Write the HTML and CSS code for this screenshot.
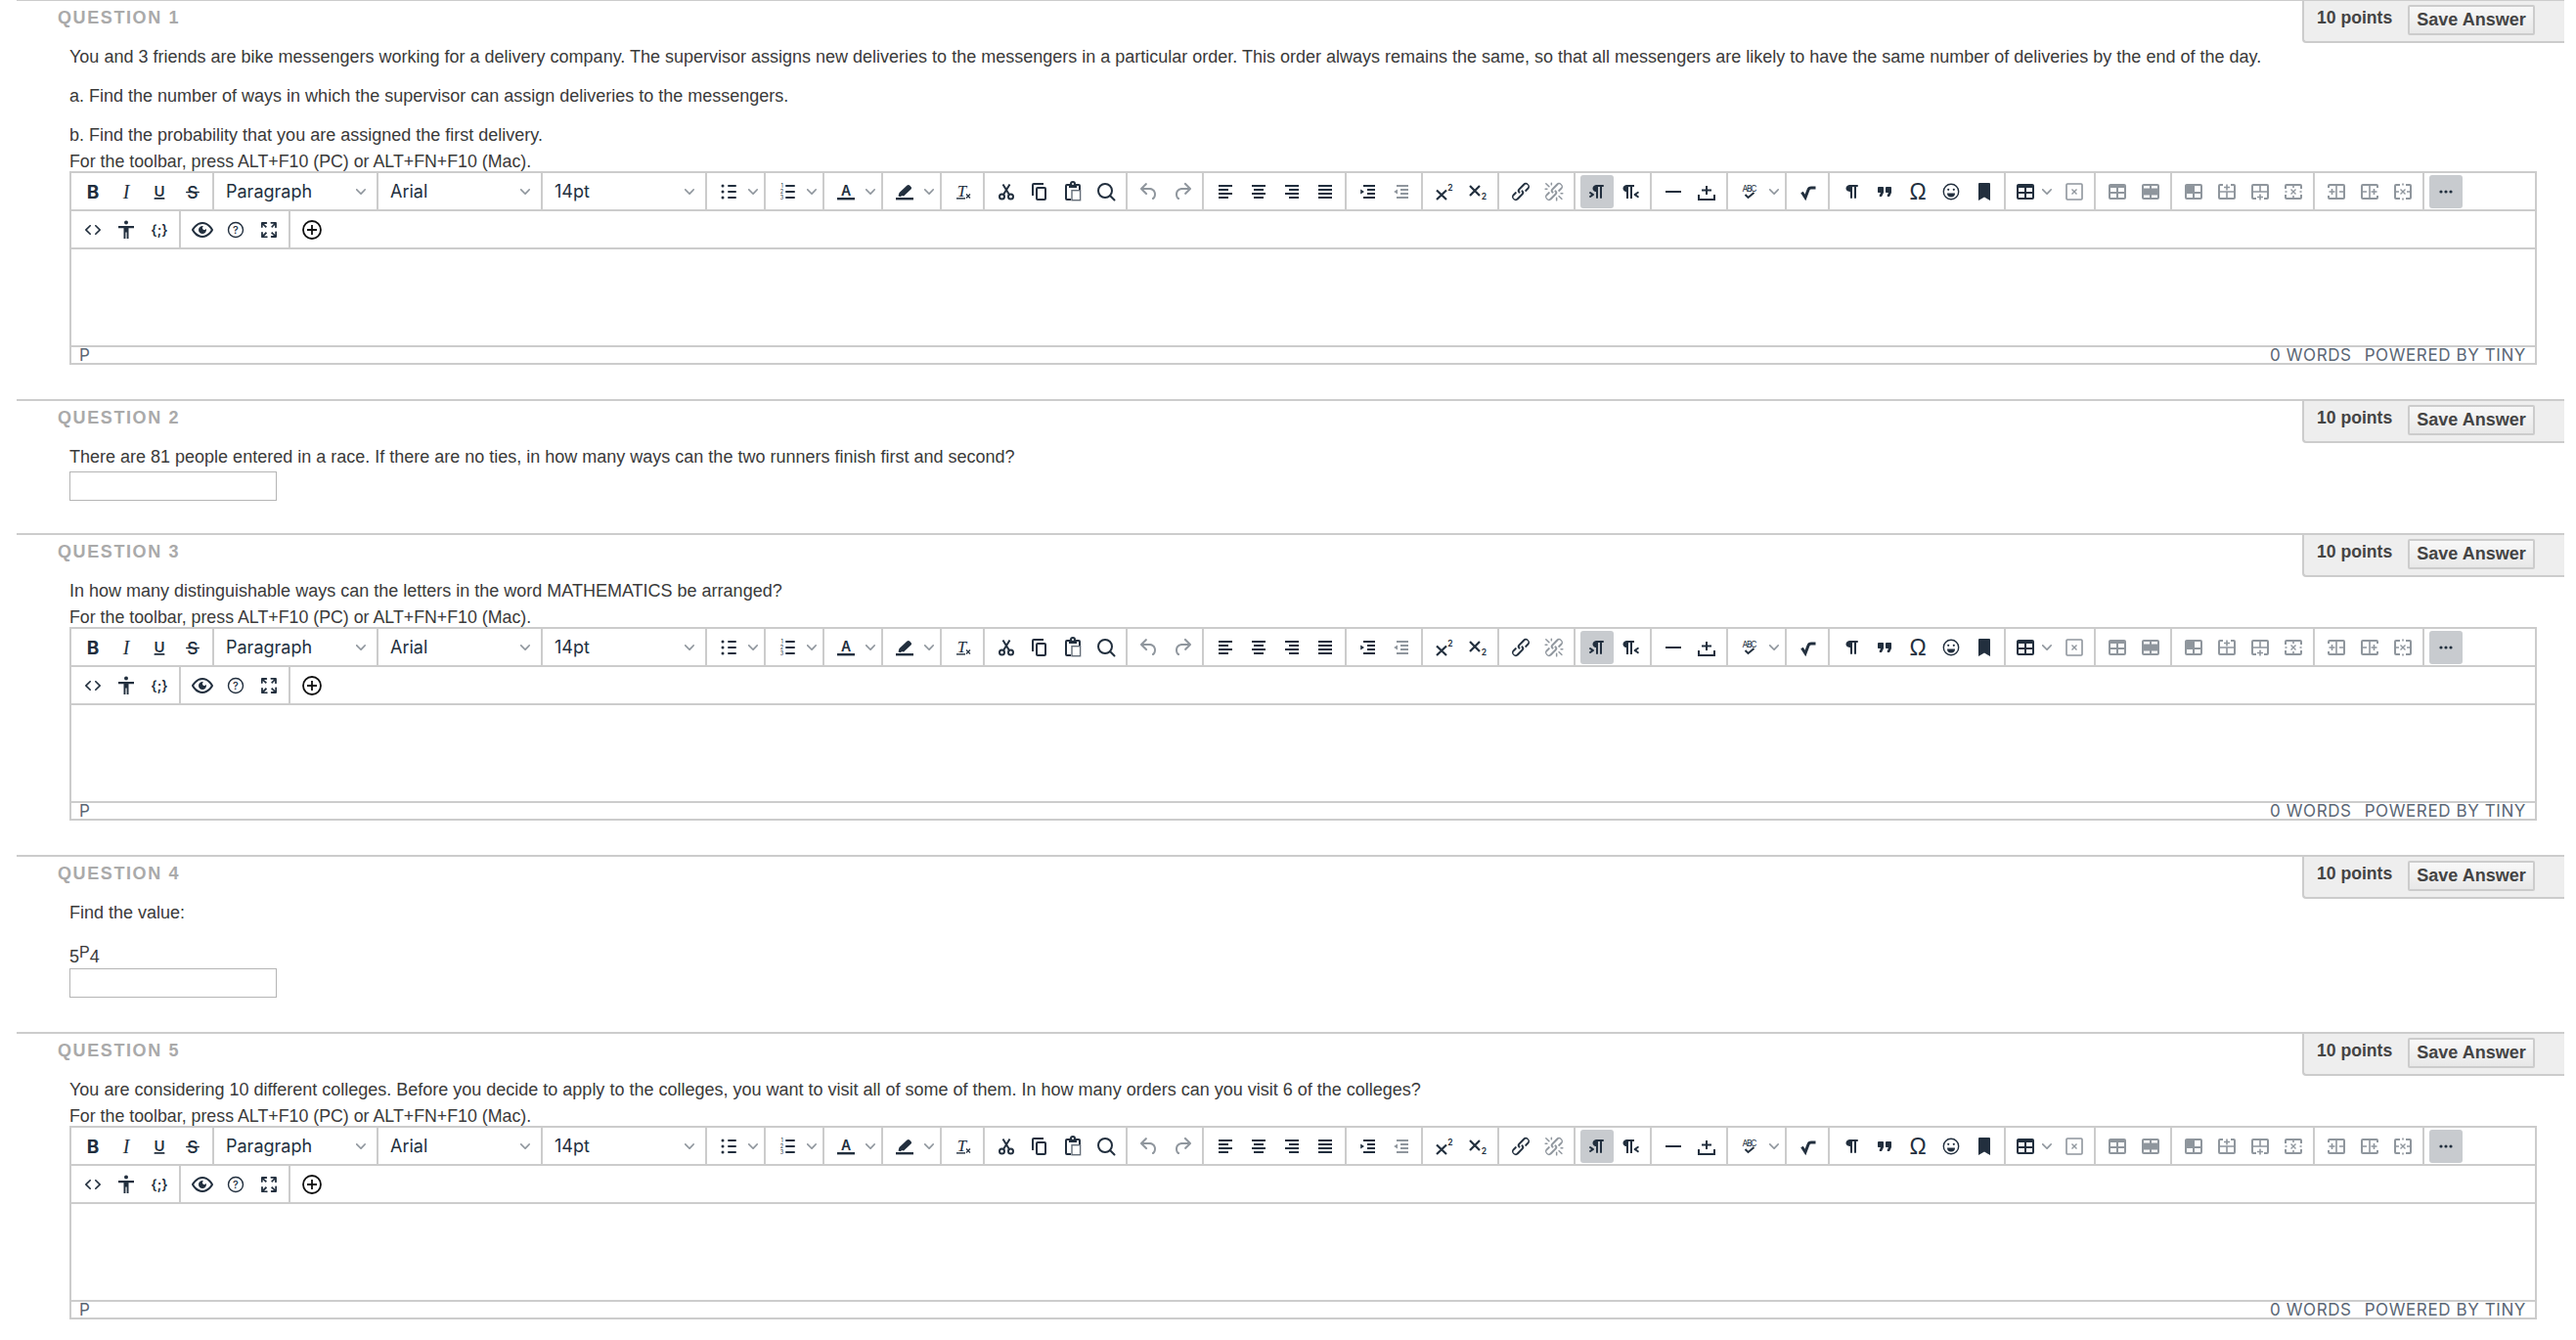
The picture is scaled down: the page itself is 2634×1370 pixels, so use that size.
FILE: index.html
```html
<!DOCTYPE html>
<html lang="en">
<head>
    <meta charset="UTF-8">
    <meta name="viewport" content="width=device-width, initial-scale=1.0">
    <title>Test</title>
    <link rel="stylesheet" href="styles.css">
</head>
<body>
    <section class="question">
        <div class="question-head">
            <h3 class="question-title">QUESTION 1</h3>
            <div class="points"><span>10 points</span><button class="save-btn">Save Answer</button></div>
        </div>
        <div class="question-body">
            <p>You and 3 friends are bike messengers working for a delivery company. The supervisor assigns new deliveries to the messengers in a particular order. This order always remains the same, so that all messengers are likely to have the same number of deliveries by the end of the day.</p>
            <p>a. Find the number of ways in which the supervisor can assign deliveries to the messengers.</p>
            <p class="last">b. Find the probability that you are assigned the first delivery.</p>
            <div class="hint">For the toolbar, press ALT+F10 (PC) or ALT+FN+F10 (Mac).</div>
            <div class="editor"></div>
        </div>
    </section>

    <section class="question">
        <div class="question-head">
            <h3 class="question-title">QUESTION 2</h3>
            <div class="points"><span>10 points</span><button class="save-btn">Save Answer</button></div>
        </div>
        <div class="question-body short">
            <p class="tight">There are 81 people entered in a race. If there are no ties, in how many ways can the two runners finish first and second?</p>
            <input class="answer" type="text">
        </div>
    </section>

    <section class="question">
        <div class="question-head">
            <h3 class="question-title">QUESTION 3</h3>
            <div class="points"><span>10 points</span><button class="save-btn">Save Answer</button></div>
        </div>
        <div class="question-body">
            <p class="last">In how many distinguishable ways can the letters in the word MATHEMATICS be arranged?</p>
            <div class="hint">For the toolbar, press ALT+F10 (PC) or ALT+FN+F10 (Mac).</div>
            <div class="editor"></div>
        </div>
    </section>

    <section class="question">
        <div class="question-head">
            <h3 class="question-title">QUESTION 4</h3>
            <div class="points"><span>10 points</span><button class="save-btn">Save Answer</button></div>
        </div>
        <div class="question-body">
            <p>Find the value:</p>
            <p class="perm">5<sup>P</sup>4</p>
            <input class="answer" type="text">
        </div>
    </section>

    <section class="question">
        <div class="question-head">
            <h3 class="question-title">QUESTION 5</h3>
            <div class="points"><span>10 points</span><button class="save-btn">Save Answer</button></div>
        </div>
        <div class="question-body">
            <p class="last">You are considering 10 different colleges. Before you decide to apply to the colleges, you want to visit all of some of them. In how many orders can you visit 6 of the colleges?</p>
            <div class="hint">For the toolbar, press ALT+F10 (PC) or ALT+FN+F10 (Mac).</div>
            <div class="editor"></div>
        </div>
    </section>

    <script src="script.js"></script>
</body>
</html>
```
FILE: styles.css
```css
* { box-sizing: border-box; }
body {
    margin: -1px 12px 0 17px;
    background: #fff;
    color: #3a3a3a;
    font-family: 'Liberation Sans', Arial, sans-serif;
    font-size: 18px;
    line-height: 20px;
}

.question { border-top: 2px solid #ccc; }
.question-head { display: flex; justify-content: space-between; align-items: flex-start; height: 47px; }
.question-title {
    margin: 7px 0 0 42px;
    color: #aaa;
    font-size: 18px;
    font-weight: bold;
    letter-spacing: 1.6px;
    line-height: 20px;
}
.points {
    display: flex;
    width: 268px;
    height: 43px;
    padding: 4px 30px 0 13px;
    justify-content: space-between;
    align-items: flex-start;
    background: #eee;
    border-left: 2px solid #ccc;
    border-bottom: 2px solid #ccc;
    border-bottom-left-radius: 4px;
    color: #444;
    font-weight: bold;
}
.points span { margin-top: 3px; font-size: 17.6px; }
.save-btn {
    width: 130px;
    height: 31px;
    padding: 0;
    background: linear-gradient(#f8f8f8, #e8e8e8);
    border: 2px solid #ccc;
    border-radius: 2px;
    color: #444;
    font-family: inherit;
    font-size: 18px;
    font-weight: bold;
}

.question-body { padding: 0 28px 35px 54px; }
.question-body.short { padding-bottom: 33px; }
.question-body p { margin: 0 0 20px; }
.question-body p.last { margin-bottom: 7px; }
.question-body p.tight { margin-bottom: 5px; }
.question-body p.perm { height: 27px; margin-bottom: 0; padding-top: 5px; }
.hint { font-size: 17.8px; }
.perm sup { font-size: 16px; line-height: 0; vertical-align: 5px; }
.answer { display: block; width: 212px; height: 30px; background: #fff; border: 1px solid #b5b5b5; }

.editor { border: 2px solid #ccc; color: #222f3e; font-family: Inter, 'Noto Sans', sans-serif; }
.tb-row { display: flex; height: 39px; border-bottom: 2px solid #ccc; }
.tb-group { display: flex; padding: 2px 3px 0 5px; border-right: 2px solid #ccc; }
.tb-group.plain { border-right: 0; }
.tb-btn { display: flex; width: 34px; height: 34px; align-items: center; justify-content: center; border-radius: 3px; }
.tb-btn svg { width: 24px; height: 24px; fill: currentColor; }
.tb-btn.off { opacity: .5; }
.tb-btn.on { background: #c8cbcf; }
.tb-chevron { display: flex; width: 16px; height: 34px; align-items: center; justify-content: center; }
.tb-chevron svg, .tb-select svg { width: 10px; height: 10px; fill: #222f3e; opacity: .5; }
.tb-select {
    display: flex;
    width: 168px;
    padding: 1px 11px 0 12px;
    justify-content: space-between;
    align-items: center;
    border-right: 2px solid #ccc;
    font-size: 18px;
}
.tb-table { padding-left: 3px; }
.tb-table .tb-chevron { justify-content: flex-start; }

.edit-area { height: 100px; border-bottom: 2px solid #ccc; }
.status {
    display: flex;
    height: 16px;
    padding: 0 9px 0 8px;
    justify-content: space-between;
    color: #5b6775;
    font-size: 17px;
    line-height: 16px;
    letter-spacing: .6px;
}
.status-right { display: flex; gap: 13px; }
```
FILE: script.js
```js
const chevron = '<svg viewBox="0 0 10 10"><path d="M8.7 2.2c.3-.3.8-.3 1 0 .4.4.4.9 0 1.2L5.7 7.8c-.3.3-.9.3-1.2 0L.2 3.4a.8.8 0 0 1 0-1.2c.3-.3.8-.3 1.1 0L5 6l3.7-3.8z"/></svg>';

// helper for the drawn table icons
const gridBox = '<rect x="4" y="5" width="16" height="14" rx="1" fill="none" stroke="currentColor" stroke-width="2"/>';
const cross = (x, y) => `<path d="M${x - 2.5} ${y - 2.5}l5 5m0-5l-5 5" fill="none" stroke="currentColor" stroke-width="1.4"/>`;
const plus = (x, y) => `<path d="M${x - 3} ${y}h6M${x} ${y - 3}v6" fill="none" stroke="currentColor" stroke-width="1.6"/>`;
const stroke = 'fill="none" stroke="currentColor"';
const tableGrid = 'M19 4a2 2 0 0 1 2 2v12a2 2 0 0 1-2 2H5a2 2 0 0 1-2-2V6c0-1.1.9-2 2-2h14zM5 14v4h6v-4H5zm14 0h-6v4h6v-4zm0-6h-6v4h6V8zM5 12h6V8H5v4z';
const pilcrow = 'M10 5h8a1 1 0 0 1 0 2h-1v11a1 1 0 0 1-2 0V7h-2v11a1 1 0 0 1-2 0v-6c-.5 0-1 0-1.4-.3A3.4 3.4 0 0 1 6.8 10a3.3 3.3 0 0 1 0-2.8 3.4 3.4 0 0 1 1.8-1.8L10 5z';

const icons = {
    bold: '<text x="12" y="19" text-anchor="middle" font-size="19" font-weight="700">B</text>',
    italic: '<text x="12" y="19" text-anchor="middle" font-size="20" font-style="italic" font-family="Liberation Serif">I</text>',
    underline: '<text x="12" y="16.5" text-anchor="middle" font-size="15" font-weight="600">U</text><rect x="6.5" y="18" width="11" height="1.8" rx=".9"/>',
    strike: '<text x="12" y="18.5" text-anchor="middle" font-size="17.5" font-weight="500">S</text><rect x="5" y="11.7" width="14" height="1.6" rx=".8"/>',
    bullist: '<rect x="11" y="5" width="9" height="2" rx="1"/><rect x="11" y="11" width="9" height="2" rx="1"/><rect x="11" y="17" width="9" height="2" rx="1"/><circle cx="6" cy="6" r="1.5"/><circle cx="6" cy="12" r="1.5"/><circle cx="6" cy="18" r="1.5"/>',
    numlist: '<rect x="10" y="5" width="10" height="2" rx="1"/><rect x="10" y="11" width="10" height="2" rx="1"/><rect x="10" y="17" width="10" height="2" rx="1"/><text x="6.5" y="8" text-anchor="middle" font-size="5.5">1</text><text x="6.5" y="14" text-anchor="middle" font-size="5.5">2</text><text x="6.5" y="20" text-anchor="middle" font-size="5.5">3</text>',
    color: '<text x="12" y="15.5" text-anchor="middle" font-size="14" font-weight="600">A</text><rect x="3" y="18" width="18" height="2.4"/>',
    highlight: '<path d="M5.5 16.5l1-3.5 8-7.5c.8-.7 2-.7 2.6 0l1.4 1.5c.7.7.7 1.8 0 2.5L11 16.5 9 16l-1 1.2z"/><rect x="3" y="18" width="18" height="2.4"/>',
    removeformat: '<text x="10.5" y="17" text-anchor="middle" font-size="17" font-style="italic" font-weight="500" font-family="Liberation Serif">T</text><rect x="5" y="18.2" width="9" height="1.4"/><path d="M15 14.5l4 4m0-4l-4 4" ' + stroke + ' stroke-width="1.2"/>',
    cut: '<g ' + stroke + ' stroke-width="2"><circle cx="7.5" cy="17" r="2.5"/><circle cx="16.5" cy="17" r="2.5"/><path d="M9 15L15.5 4.5M15 15L8.5 4.5"/></g>',
    copy: '<path d="M16 3H6a2 2 0 0 0-2 2v11h2V5h10V3zm1 4H10a2 2 0 0 0-2 2v10c0 1.1.9 2 2 2h7a2 2 0 0 0 2-2V9a2 2 0 0 0-2-2zm0 12H10V9h7v10z"/>',
    paste: '<path d="M6 4h3a3 3 0 0 1 6 0h3a2 2 0 0 1 2 2v4h-2V6h-2v2H8V6H6v13h4v2H6a2 2 0 0 1-2-2V6a2 2 0 0 1 2-2z"/><circle cx="12" cy="4" r="1" fill="#fff"/><rect x="11" y="10.7" width="8.6" height="10" fill="none" stroke="currentColor" stroke-width="1.4" opacity=".7"/>',
    search: '<g ' + stroke + ' stroke-width="2"><circle cx="11" cy="11" r="7"/><path d="M16 16l4.5 4.5" stroke-linecap="round"/></g>',
    undo: '<path d="M6.4 8H12c3.7 0 6.2 2 6.8 5.1.6 2.7-.4 5.6-2.3 6.8a1 1 0 0 1-1-1.8c1.1-.6 1.8-2.7 1.4-4.6-.5-2.1-2.1-3.5-4.9-3.5H6.4l3.3 3.3a1 1 0 1 1-1.4 1.4l-5-5a1 1 0 0 1 0-1.4l5-5a1 1 0 0 1 1.4 1.4L6.4 8z"/>',
    redo: '<path d="M17.6 10H12c-2.8 0-4.4 1.4-4.9 3.5-.4 2 .3 4 1.4 4.6a1 1 0 1 1-1 1.8c-2-1.2-2.9-4.1-2.3-6.8.6-3 3-5.1 6.8-5.1h5.6l-3.3-3.3a1 1 0 1 1 1.4-1.4l5 5a1 1 0 0 1 0 1.4l-5 5a1 1 0 0 1-1.4-1.4l3.3-3.3z"/>',
    alignleft: '<path d="M5 5h14v2H5zM5 9h10v2H5zM5 13h14v2H5zM5 17h10v2H5z"/>',
    aligncenter: '<path d="M5 5h14v2H5zM7 9h10v2H7zM5 13h14v2H5zM7 17h10v2H7z"/>',
    alignright: '<path d="M5 5h14v2H5zM9 9h10v2H9zM5 13h14v2H5zM9 17h10v2H9z"/>',
    justify: '<path d="M5 5h14v2H5zM5 9h14v2H5zM5 13h14v2H5zM5 17h14v2H5z"/>',
    indent: '<path d="M7 5h12v2H7zM11 9h8v2h-8zM11 13h8v2h-8zM7 17h12v2H7zM4.2 9.5L8 12l-3.8 2.5z"/>',
    outdent: '<path d="M7 5h12v2H7zM11 9h8v2h-8zM11 13h8v2h-8zM7 17h12v2H7zM8 9.5L4.2 12 8 14.5z"/>',
    sup: '<path d="M4 10.5l10 9.5m0-9.5L4 20" ' + stroke + ' stroke-width="2.2"/><text x="18" y="11" text-anchor="middle" font-size="8.5" font-weight="600">2</text>',
    sub: '<path d="M4 6l10 10m0-10L4 16" ' + stroke + ' stroke-width="2.2"/><text x="18.5" y="20" text-anchor="middle" font-size="8.5" font-weight="600">2</text>',
    link: '<path d="M6.2 12.3a1 1 0 0 1 1.4 1.4l-2 2a2 2 0 1 0 2.6 2.8l4.8-4.8a1 1 0 0 0 0-1.4 1 1 0 1 1 1.4-1.3 2.9 2.9 0 0 1 0 4L9.6 20a3.9 3.9 0 0 1-5.5-5.5l2-2zm11.6-.6a1 1 0 0 1-1.4-1.4l2-2a2 2 0 1 0-2.6-2.8L11 10.3a1 1 0 0 0 0 1.4 1 1 0 1 1-1.4 1.3 2.9 2.9 0 0 1 0-4L14.4 4a3.9 3.9 0 0 1 5.5 5.5l-2 2z"/>',
    unlink: '<path d="M6.2 12.3a1 1 0 0 1 1.4 1.4l-2.1 2a2 2 0 1 0 2.7 2.8l4.8-4.8a1 1 0 0 0 0-1.4 1 1 0 1 1 1.4-1.3 2.9 2.9 0 0 1 0 4L9.6 20a3.9 3.9 0 0 1-5.5-5.5l2-2zm11.6-.6a1 1 0 0 1-1.4-1.4l2.1-2a2 2 0 1 0-2.7-2.8L11 10.3a1 1 0 0 0 0 1.4A1 1 0 1 1 9.6 13a2.9 2.9 0 0 1 0-4L14.4 4a3.9 3.9 0 0 1 5.5 5.5l-2 2zM7.6 6.3a.8.8 0 0 1-1 1.1L3.3 4.2a.7.7 0 1 1 1-1l3.2 3.1zM5.1 8.6a.8.8 0 0 1 0 1.5H3a.8.8 0 0 1 0-1.5H5zm5-3.5a.8.8 0 0 1-1.5 0V3a.8.8 0 0 1 1.5 0v2zm6.3 11.8a.8.8 0 0 1 1-1l3.2 3.2a.8.8 0 0 1-1 1L16.4 17zm2.5-2.3a.8.8 0 0 1 0-1.5H21a.8.8 0 0 1 0 1.5h-2.1zm-5 3.5a.8.8 0 0 1 1.5 0V21a.8.8 0 0 1-1.5 0v-2.1z"/>',
    ltr: '<path d="M11 5h7a1 1 0 0 1 0 2h-1v11a1 1 0 0 1-2 0V7h-2v11a1 1 0 0 1-2 0v-6c-.5 0-1 0-1.4-.3A3.4 3.4 0 0 1 7.8 10a3.3 3.3 0 0 1 0-2.8 3.4 3.4 0 0 1 1.8-1.8L11 5zM4.4 16.2L6.2 15l-1.8-1.2a1 1 0 0 1 1.2-1.6l3 2a1 1 0 0 1 0 1.6l-3 2a1 1 0 1 1-1.2-1.6z"/>',
    rtl: '<path d="M8 5h8v2h-2v12h-2V7h-2v12H8v-7c-.5 0-1 0-1.4-.3A3.4 3.4 0 0 1 4.8 10a3.3 3.3 0 0 1 0-2.8 3.4 3.4 0 0 1 1.8-1.8L8 5zm12 11.2a1 1 0 1 1-1 1.6l-3-2a1 1 0 0 1 0-1.6l3-2a1 1 0 1 1 1 1.6L18.4 15l1.8 1.2z"/>',
    hr: '<rect x="4" y="11" width="16" height="2"/>',
    pagebreak: '<path d="M4 15v5h16v-5M12 6v9M7 10.5h10" ' + stroke + ' stroke-width="2"/>',
    spell: '<text x="12" y="12" text-anchor="middle" font-size="8.5" textLength="15">ABC</text><path d="M7.5 15l3 3 6-5" ' + stroke + ' stroke-width="2"/>',
    check: '<path d="M5.5 12.5L9 18l3-8c.5-1.5 1.5-2 3-2h4.5" ' + stroke + ' stroke-width="3"/>',
    blocks: '<path d="' + pilcrow + '"/>',
    quote: '<path d="M7.5 17h.9c.4 0 .7-.2.9-.6L11 13V8c0-.6-.4-1-1-1H6a1 1 0 0 0-1 1v4c0 .6.4 1 1 1h2l-1.3 2.7a1 1 0 0 0 .8 1.3zm8 0h.9c.4 0 .7-.2.9-.6L19 13V8c0-.6-.4-1-1-1h-4a1 1 0 0 0-1 1v4c0 .6.4 1 1 1h2l-1.3 2.7a1 1 0 0 0 .8 1.3z"/>',
    charmap: '<text x="12" y="20" text-anchor="middle" font-size="23" font-family="Liberation Sans">Ω</text>',
    emoji: '<circle cx="12" cy="12" r="7.7" ' + stroke + ' stroke-width="1.4"/><circle cx="9.2" cy="9.8" r="1.1"/><circle cx="14.8" cy="9.8" r="1.1"/><path d="M8 13.5h8a4 4 0 0 1-8 0z"/>',
    bookmark: '<path d="M7 3h10a1 1 0 0 1 1 1v17l-6-3.5L6 21V4a1 1 0 0 1 1-1z"/>',
    table: '<path fill-rule="evenodd" d="' + tableGrid + '"/>',
    tabledel: '<rect x="4" y="4" width="16" height="16" rx="1" ' + stroke + ' stroke-width="1.6"/>' + cross(12, 12),
    cellprops: '<path fill-rule="evenodd" d="' + tableGrid + '"/>',
    rowprops: '<path fill-rule="evenodd" d="M19 4a2 2 0 0 1 2 2v12a2 2 0 0 1-2 2H5a2 2 0 0 1-2-2V6c0-1.1.9-2 2-2zM5 15.5V18h6v-2.5zm8 0V18h6v-2.5zM5 6v2.5h6V6zm8 0v2.5h6V6z"/>',
    merge: '<path fill-rule="evenodd" d="M19 4a2 2 0 0 1 2 2v12a2 2 0 0 1-2 2H5a2 2 0 0 1-2-2V6c0-1.1.9-2 2-2zM5 14v4h6v-4zm8 0v4h6v-4zm0-8v6h6V6z"/>',
    rowbefore: gridBox + '<path d="M4 12h16M12 12v7" ' + stroke + ' stroke-width="1.6"/><rect x="8" y="3" width="8" height="8" fill="#fff"/>' + plus(12, 7.5),
    rowafter: gridBox + '<path d="M4 12h16M12 5v7" ' + stroke + ' stroke-width="1.6"/><rect x="8" y="14" width="8" height="8" fill="#fff"/>' + plus(12, 17.5),
    rowdel: gridBox + '<path d="M12 5v3M12 16v3" ' + stroke + ' stroke-width="1.6"/><rect x="2" y="9" width="20" height="6" fill="#fff"/><path d="M3.5 12h2M18.5 12h2" ' + stroke + ' stroke-width="1.6"/>' + cross(12, 12),
    colbefore: gridBox + '<path d="M12 5v14M15 12h5" ' + stroke + ' stroke-width="1.6"/><rect x="3" y="8" width="8" height="8" fill="#fff"/>' + plus(7.5, 12),
    colafter: gridBox + '<path d="M12 5v14M4 12h5" ' + stroke + ' stroke-width="1.6"/><rect x="13" y="8" width="8" height="8" fill="#fff"/>' + plus(16.5, 12),
    coldel: gridBox + '<rect x="9" y="3" width="6" height="18" fill="#fff"/><path d="M12 3.5v2M12 18.5v2M4 12h4M16 12h4" ' + stroke + ' stroke-width="1.6"/>' + cross(12, 12),
    more: '<circle cx="7" cy="12" r="1.6"/><circle cx="12" cy="12" r="1.6"/><circle cx="17" cy="12" r="1.6"/>',
    code: '<path d="M9.8 15.7c.3.3.3.8 0 1-.3.4-.9.4-1.2 0l-4.4-4.1a.8.8 0 0 1 0-1.2l4.4-4.2c.3-.3.9-.3 1.2 0 .3.3.3.8 0 1.1L6 12l3.8 3.7zm4.4 0L18 12l-3.8-3.7c-.3-.3-.3-.8 0-1.1.3-.3.9-.3 1.2 0l4.4 4.2c.4.3.4.8 0 1.2l-4.4 4.1c-.3.4-.9.4-1.2 0a.8.8 0 0 1 0-1z"/>',
    a11y: '<circle cx="12" cy="4.5" r="2"/><path d="M4 8h16v2.2h-5.5V21h-1.9v-6.5h-1.2V21H9.5V10.2H4z"/>',
    template: '<text x="12" y="16.5" text-anchor="middle" font-size="14" font-weight="600">{;}</text>',
    preview: '<path d="M3.5 12.5c.5.8 1.1 1.6 1.8 2.3 2 2 4.2 3.2 6.7 3.2s4.7-1.2 6.7-3.2a16.2 16.2 0 0 0 2.1-2.8 15.7 15.7 0 0 0-2.1-2.8c-2-2-4.2-3.2-6.7-3.2a9.3 9.3 0 0 0-6.7 3.2A16.2 16.2 0 0 0 3.2 12c0 .2.2.3.3.5zm-2.4-1l.7-1.2L4 7.8C6.2 5.4 8.9 4 12 4c3 0 5.8 1.4 8.1 3.8a18.2 18.2 0 0 1 2.8 3.7v1l-.7 1.2-2.1 2.5c-2.3 2.4-5 3.8-8.1 3.8a11 11 0 0 1-8.1-3.8 18.2 18.2 0 0 1-2.8-3.7 1 1 0 0 1 0-1zm12-3.3a2 2 0 1 0 2.7 2.6 4 4 0 1 1-2.7-2.6z"/>',
    help: '<circle cx="12" cy="12" r="7.5" ' + stroke + ' stroke-width="1.4"/><text x="12" y="16" text-anchor="middle" font-size="11" font-weight="500">?</text>',
    fullscreen: '<path d="M15.3 10l-1.2-1.3 2.9-3h-2.3a.9.9 0 1 1 0-1.7H19c.5 0 .9.4.9.9v4.4a.9.9 0 1 1-1.8 0V7l-2.9 3zm0 4l3 3v-2.3a.9.9 0 1 1 1.7 0V19c0 .5-.4.9-.9.9h-4.4a.9.9 0 1 1 0-1.8H17l-3-2.9 1.3-1.2zM10 15.4l-2.9 3h2.3a.9.9 0 1 1 0 1.7H5a.9.9 0 0 1-.9-.9v-4.4a.9.9 0 1 1 1.8 0V17l2.9-3 1.2 1.3zM8.7 10L5.7 7v2.3a.9.9 0 0 1-1.7 0V5c0-.5.4-.9.9-.9h4.4a.9.9 0 0 1 0 1.8H7l3 2.9-1.3 1.2z"/>',
    add: '<circle cx="12" cy="12" r="9" fill="none" stroke="#111" stroke-width="1.8"/><path d="M12 7v10M7 12h10" fill="none" stroke="#111" stroke-width="1.8"/>'
};

// icon name, "name*" = split button with chevron, "name-" = disabled, "name+" = pressed
const row1 = [
    ['bold', 'italic', 'underline', 'strike'],
    'Paragraph', 'Arial', '14pt',
    ['bullist*'], ['numlist*'], ['color*'], ['highlight*'],
    ['removeformat'],
    ['cut', 'copy', 'paste', 'search'],
    ['undo-', 'redo-'],
    ['alignleft', 'aligncenter', 'alignright', 'justify'],
    ['indent', 'outdent-'],
    ['sup', 'sub'],
    ['link', 'unlink-'],
    ['ltr+', 'rtl'],
    ['hr', 'pagebreak'],
    ['spell*'],
    ['check'],
    ['blocks', 'quote', 'charmap', 'emoji', 'bookmark'],
    ['table*', 'tabledel-'],
    ['cellprops-', 'rowprops-'],
    ['merge-', 'rowbefore-', 'rowafter-', 'rowdel-'],
    ['colbefore-', 'colafter-', 'coldel-'],
    ['more+']
];
const row2 = [
    ['code', 'a11y', 'template'],
    ['preview', 'help', 'fullscreen'],
    ['add']
];

function makeButton(spec) {
    const name = spec.replace(/[*+-]$/, '');
    let cls = 'tb-btn';
    if (spec.endsWith('-')) cls += ' off';
    if (spec.endsWith('+')) cls += ' on';
    let html = `<div class="${cls}"><svg viewBox="0 0 24 24">${icons[name]}</svg></div>`;
    if (spec.endsWith('*')) html += `<div class="tb-chevron">${chevron}</div>`;
    return html;
}

function makeRow(groups) {
    const row = document.createElement('div');
    row.className = 'tb-row';
    groups.forEach((group, i) => {
        if (typeof group === 'string') {
            row.innerHTML += `<div class="tb-select"><span>${group}</span>${chevron}</div>`;
            return;
        }
        let cls = 'tb-group';
        if (group[0] === 'table*') cls += ' tb-table';
        if (i === groups.length - 1) cls += ' plain';
        row.innerHTML += `<div class="${cls}">${group.map(makeButton).join('')}</div>`;
    });
    return row;
}

document.querySelectorAll('.editor').forEach(editor => {
    editor.appendChild(makeRow(row1));
    editor.appendChild(makeRow(row2));
    editor.insertAdjacentHTML('beforeend', `
        <div class="edit-area"></div>
        <div class="status"><span>P</span><div class="status-right"><span>0 WORDS</span><span>POWERED BY TINY</span></div></div>`);
});
```
